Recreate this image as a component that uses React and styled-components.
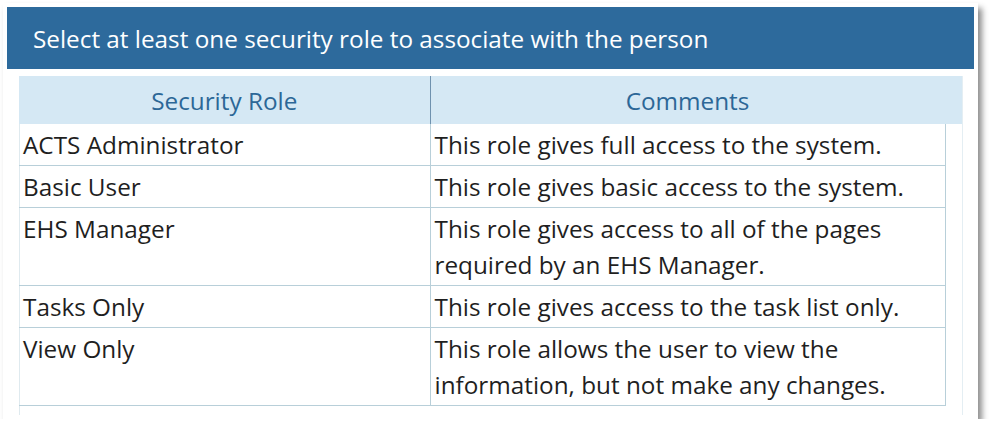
import React from "react";
import styled, { createGlobalStyle } from "styled-components";

const Global = createGlobalStyle`
  html, body { margin: 0; padding: 0; background: #ffffff; }
  body { font-family: "Open Sans", "Noto Sans", sans-serif; }
`;

const Card = styled.div`
  box-sizing: border-box;
  margin: 3px 0 0 3px;
  width: 975px;
  height: 416px;
  padding: 4px;
  background: #ffffff;
  box-shadow: 4px 5px 6px rgba(0, 0, 0, 0.45);
  display: flex;
  flex-direction: column;
`;

const Header = styled.div`
  height: 62px;
  flex: none;
  background: #2d6a9c;
  color: #ffffff;
  display: flex;
  align-items: center;
  padding-left: 26px;
  font-size: 24.3px;
`;

const Body = styled.div`
  flex: 1;
  padding: 7px 11px 0 12px;
  display: flex;
  min-height: 0;
`;

const ScrollArea = styled.div`
  display: flex;
  width: 944px;
  border-right: 1px solid #e4eef3;
  box-sizing: border-box;
`;

const TableWrap = styled.div`
  width: 926px;
  flex: none;
  border-left: 1px solid #dfeaef;
  box-sizing: border-box;
`;

const Gutter = styled.div`
  flex: 1;
  display: flex;
  flex-direction: column;
`;

const GutterHead = styled.div`
  height: 48px;
  background: #d5e8f4;
`;

const Table = styled.table`
  width: 926px;
  margin-left: -1px;
  border-collapse: collapse;
  table-layout: fixed;
  font-size: 24.3px;
  color: #1f1f1f;
`;

const Th = styled.th`
  height: 48px;
  padding: 0;
  background: #d5e8f4;
  color: #2c6797;
  font-weight: 400;
  text-align: center;
  border-right: 1px solid #6f91ae;
`;

const Td = styled.td`
  padding: 3px 4px 2px 4px;
  line-height: 36px;
  vertical-align: top;
  border-bottom: 1px solid #b8cfd9;
  border-right: 1px solid #b8cfd9;
`;

const rows = [
  ["ACTS Administrator", "This role gives full access to the system."],
  ["Basic User", "This role gives basic access to the system."],
  ["EHS Manager", "This role gives access to all of the pages required by an EHS Manager."],
  ["Tasks Only", "This role gives access to the task list only."],
  ["View Only", "This role allows the user to view the information, but not make any changes."],
];

export default function App() {
  return (
    <>
      <Global />
      <Card>
        <Header>Select at least one security role to associate with the person</Header>
        <Body>
          <ScrollArea>
            <TableWrap>
              <Table>
                <colgroup>
                  <col style={{ width: 411 }} />
                  <col style={{ width: 515 }} />
                </colgroup>
                <thead>
                  <tr>
                    <Th>Security Role</Th>
                    <Th>Comments</Th>
                  </tr>
                </thead>
                <tbody>
                  {rows.map(([role, comment]) => (
                    <tr key={role}>
                      <Td>{role}</Td>
                      <Td>{comment}</Td>
                    </tr>
                  ))}
                </tbody>
              </Table>
            </TableWrap>
            <Gutter>
              <GutterHead />
            </Gutter>
          </ScrollArea>
        </Body>
      </Card>
    </>
  );
}
